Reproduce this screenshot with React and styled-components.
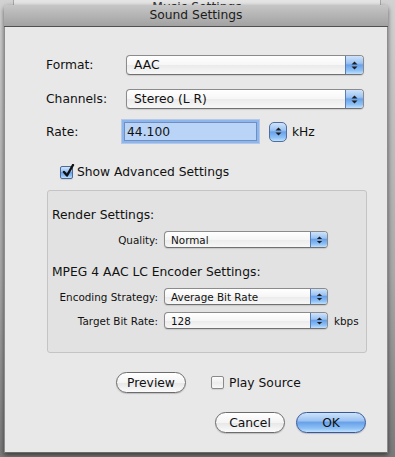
import React from "react";
import styled, { createGlobalStyle, css } from "styled-components";

const Global = createGlobalStyle`
  html, body { margin: 0; padding: 0; }
  body {
    width: 395px; height: 457px; overflow: hidden;
    font-family: "DejaVu Sans", "Liberation Sans", sans-serif;
    color: #111;
  }
`;

const Page = styled.div`
  width: 395px;
  height: 457px;
  overflow: hidden;
  background: linear-gradient(to bottom, #d2d2d2 0%, #a9a9a9 60%, #7a7a7a 100%);
  display: flex;
  flex-direction: column;
`;

const ParentStrip = styled.div`
  height: 5px;
  margin: 0 14px 0 13px;
  background: #e4e4e4;
  border-left: 1px solid #a6a6a6;
  border-right: 1px solid #a6a6a6;
  overflow: hidden;
  display: flex;
  justify-content: center;
  align-items: flex-end;
`;

const ParentTitle = styled.span`
  font-size: 12.3px;
  line-height: 14px;
  margin-bottom: -9px;
  color: #333;
`;

const Sheet = styled.div`
  margin-left: 4px;
  width: 384px;
  height: 448px;
  display: flex;
  flex-direction: column;
  box-shadow: 0 2px 5px rgba(0, 0, 0, 0.55);
  border-radius: 4px 4px 0 0;
`;

const TitleBar = styled.div`
  height: 21px;
  line-height: 21px;
  text-align: center;
  font-size: 12.3px;
  color: #1c1c1c;
  border-radius: 4px 4px 0 0;
  background: linear-gradient(to bottom, #c6c6c6, #a2a2a2);
  border-bottom: 1px solid #505050;
`;

const Body = styled.div`
  flex: 1;
  background: #e8e8e8;
  border-left: 1px solid #8c8c8c;
  border-right: 1px solid #8c8c8c;
  border-bottom: 1px solid #6c6c6c;
  display: flex;
  flex-direction: column;
  font-size: 12.3px;
`;

const Row = styled.div`
  display: flex;
  align-items: center;
  margin-top: ${(p) => p.$top}px;
  padding-left: ${(p) => p.$left ?? 41}px;
  height: ${(p) => p.$h ?? 20}px;
`;

const Label = styled.span`
  width: 80px;
  flex: none;
`;

const aqua = css`
  background: linear-gradient(
    to bottom,
    #cfe3fb 0%,
    #9cc3f2 40%,
    #6aa2ea 50%,
    #8cc0f5 80%,
    #c2e0fc 100%
  );
`;

const PopupBox = styled.div`
  display: flex;
  align-items: stretch;
  width: ${(p) => p.$w}px;
  height: ${(p) => (p.$small ? 17 : 20)}px;
  box-sizing: border-box;
  border: 1px solid #8b8b8b;
  border-bottom-color: #707070;
  border-radius: 4px;
  overflow: hidden;
  background: linear-gradient(to bottom, #ffffff 0%, #f6f6f6 50%, #ebebeb 51%, #f7f7f7 100%);
  box-shadow: 0 1px 1px rgba(0, 0, 0, 0.12);
  font-size: ${(p) => (p.$small ? "10.4px" : "12.3px")};
`;

const PopupText = styled.span`
  flex: 1;
  padding-left: ${(p) => (p.$small ? 6 : 7)}px;
  display: flex;
  align-items: center;
  white-space: nowrap;
`;

const PopupArrows = styled.span`
  flex: none;
  width: ${(p) => (p.$small ? 16 : 17)}px;
  border-left: 1px solid #5a7cb2;
  ${aqua}
  display: flex;
  align-items: center;
  justify-content: center;
`;

const Arrows = ({ size = 9 }) => (
  <svg width="7" height={size} viewBox="0 0 7 9">
    <path d="M3.5 0.5 L6.5 3.5 L0.5 3.5 Z" fill="#1e1e1e" />
    <path d="M0.5 5.5 L6.5 5.5 L3.5 8.5 Z" fill="#1e1e1e" />
  </svg>
);

const Popup = ({ value, w, small }) => (
  <PopupBox $w={w} $small={small}>
    <PopupText $small={small}>{value}</PopupText>
    <PopupArrows $small={small}>
      <Arrows size={small ? 8 : 9} />
    </PopupArrows>
  </PopupBox>
);

const TextField = styled.div`
  margin-left: -2px;
  width: 133px;
  height: 19px;
  box-sizing: border-box;
  border: 1px solid #6f8fbf;
  background: #b9d4f6;
  box-shadow: 0 0 0 2px #8db6ee, 0 0 0 3px rgba(120, 165, 230, 0.45);
  display: flex;
  align-items: center;
  padding-left: 2px;
  font-size: 12.3px;
`;

const Stepper = styled.div`
  margin-left: 12px;
  width: 18px;
  height: 20px;
  box-sizing: border-box;
  border: 1px solid #4e6f9f;
  border-radius: 5px;
  ${aqua}
  display: flex;
  align-items: center;
  justify-content: center;
`;

const Unit = styled.span`
  margin-left: ${(p) => p.$gap ?? 5}px;
  font-size: ${(p) => (p.$small ? "10.4px" : "12.3px")};
`;

const Box = styled.span`
  width: 13px;
  height: 13px;
  box-sizing: border-box;
  border-radius: 2px;
  border: 1px solid ${(p) => (p.$checked ? "#4a6a9c" : "#8a8a8a")};
  ${(p) =>
    p.$checked
      ? aqua
      : css`
          background: linear-gradient(to bottom, #fdfdfd, #ececec 55%, #f8f8f8);
        `}
  position: relative;
  flex: none;
  box-shadow: 0 1px 1px rgba(0, 0, 0, 0.1);
`;

const Check = styled.svg`
  position: absolute;
  left: 1px;
  top: -3px;
`;

const CheckLabel = styled.span`
  margin-left: ${(p) => p.$gap ?? 4}px;
`;

const Checkbox = ({ checked, children, gap }) => (
  <>
    <Box $checked={checked}>
      {checked && (
        <Check width="13" height="14" viewBox="0 0 13 14">
          <path d="M2 8 L5 11.5 L11 1" fill="none" stroke="#111" strokeWidth="2.4" strokeLinecap="round" strokeLinejoin="round" />
        </Check>
      )}
    </Box>
    <CheckLabel $gap={gap}>{children}</CheckLabel>
  </>
);

const Group = styled.div`
  margin: 11px 0 0 42px;
  width: 320px;
  height: 163px;
  box-sizing: border-box;
  border: 1px solid #c4c4c4;
  border-radius: 3px;
  background: #e2e2e2;
  display: flex;
  flex-direction: column;
`;

const GroupHeading = styled.div`
  margin-top: ${(p) => p.$top}px;
  padding-left: 4px;
  height: 16px;
  line-height: 16px;
  font-size: 12.3px;
`;

const SmallRow = styled.div`
  display: grid;
  grid-template-columns: 110px 164px auto;
  column-gap: 6px;
  align-items: center;
  margin-top: ${(p) => p.$top}px;
  height: 17px;
  font-size: 10.4px;
`;

const SmallLabel = styled.span`
  text-align: right;
  white-space: nowrap;
`;

const Button = styled.div`
  width: ${(p) => p.$w}px;
  height: 21px;
  box-sizing: border-box;
  border-radius: 11px;
  border: 1px solid ${(p) => (p.$default ? "#37589a" : "#6c6c6c")};
  ${(p) =>
    p.$default
      ? aqua
      : css`
          background: linear-gradient(to bottom, #ffffff 0%, #f4f4f4 50%, #e6e6e6 51%, #fbfbfb 100%);
        `}
  box-shadow: 0 1px 1px rgba(0, 0, 0, 0.18);
  display: flex;
  align-items: center;
  justify-content: center;
  font-size: 12.3px;
  flex: none;
`;

const ButtonRow = styled.div`
  display: flex;
  align-items: center;
  margin-top: ${(p) => p.$top}px;
  padding-left: ${(p) => p.$left}px;
  height: 21px;
`;

const Spacer = styled.span`
  width: ${(p) => p.$w}px;
  flex: none;
`;

export default function App() {
  return (
    <>
      <Global />
      <Page>
        <ParentStrip>
          <ParentTitle>Music Settings</ParentTitle>
        </ParentStrip>
        <Sheet>
          <TitleBar>Sound Settings</TitleBar>
          <Body>
            <Row $top={28}>
              <Label>Format:</Label>
              <Popup value="AAC" w={238} />
            </Row>
            <Row $top={14}>
              <Label>Channels:</Label>
              <Popup value="Stereo (L R)" w={238} />
            </Row>
            <Row $top={12} $h={21}>
              <Label>Rate:</Label>
              <TextField>44.100</TextField>
              <Stepper>
                <Arrows />
              </Stepper>
              <Unit>kHz</Unit>
            </Row>
            <Row $top={23} $h={14} $left={55}>
              <Checkbox checked>Show Advanced Settings</Checkbox>
            </Row>
            <Group>
              <GroupHeading $top={16}>Render Settings:</GroupHeading>
              <SmallRow $top={8}>
                <SmallLabel>Quality:</SmallLabel>
                <Popup value="Normal" w={164} small />
              </SmallRow>
              <GroupHeading $top={16}>MPEG 4 AAC LC Encoder Settings:</GroupHeading>
              <SmallRow $top={8}>
                <SmallLabel>Encoding Strategy:</SmallLabel>
                <Popup value="Average Bit Rate" w={164} small />
              </SmallRow>
              <SmallRow $top={7}>
                <SmallLabel>Target Bit Rate:</SmallLabel>
                <Popup value="128" w={164} small />
                <Unit $small $gap={0}>kbps</Unit>
              </SmallRow>
            </Group>
            <ButtonRow $top={19} $left={111}>
              <Button $w={70}>Preview</Button>
              <Spacer $w={25} />
              <Checkbox gap={5}>Play Source</Checkbox>
            </ButtonRow>
            <ButtonRow $top={19} $left={210}>
              <Button $w={70}>Cancel</Button>
              <Spacer $w={11} />
              <Button $w={70} $default>OK</Button>
            </ButtonRow>
          </Body>
        </Sheet>
      </Page>
    </>
  );
}
